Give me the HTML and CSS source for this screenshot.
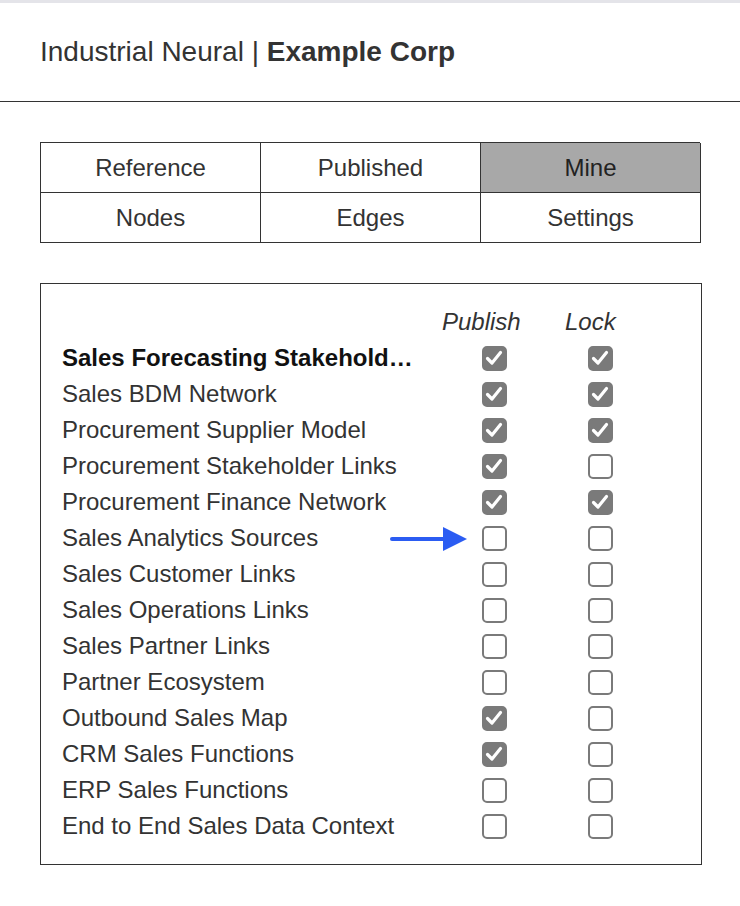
FILE: index.html
```html
<!DOCTYPE html>
<html lang="en">
<head>
    <meta charset="UTF-8">
    <meta name="viewport" content="width=device-width, initial-scale=1.0">
    <title>Industrial Neural | Example Corp</title>
    <link rel="stylesheet" href="styles.css">
</head>
<body>
    <header class="top">
        <h1>Industrial Neural | <b>Example Corp</b></h1>
    </header>

    <main class="page">
        <nav class="tabs">
            <div class="tab">Reference</div>
            <div class="tab">Published</div>
            <div class="tab active">Mine</div>
            <div class="tab">Nodes</div>
            <div class="tab">Edges</div>
            <div class="tab">Settings</div>
        </nav>

        <section class="panel">
            <div class="row head">
                <div class="name"></div>
                <div class="col-pub">Publish</div>
                <div class="col-lock">Lock</div>
            </div>

            <div class="row">
                <div class="name strong">Sales Forecasting Stakeholders</div>
                <div class="col-pub"><span class="box on"></span></div>
                <div class="col-lock"><span class="box on"></span></div>
            </div>
            <div class="row">
                <div class="name">Sales BDM Network</div>
                <div class="col-pub"><span class="box on"></span></div>
                <div class="col-lock"><span class="box on"></span></div>
            </div>
            <div class="row">
                <div class="name">Procurement Supplier Model</div>
                <div class="col-pub"><span class="box on"></span></div>
                <div class="col-lock"><span class="box on"></span></div>
            </div>
            <div class="row">
                <div class="name">Procurement Stakeholder Links</div>
                <div class="col-pub"><span class="box on"></span></div>
                <div class="col-lock"><span class="box"></span></div>
            </div>
            <div class="row">
                <div class="name">Procurement Finance Network</div>
                <div class="col-pub"><span class="box on"></span></div>
                <div class="col-lock"><span class="box on"></span></div>
            </div>
            <div class="row">
                <div class="name">Sales Analytics Sources</div>
                <div class="col-pub">
                    <svg class="pointer" width="80" height="28" viewBox="0 0 80 28">
                        <line x1="2" y1="14" x2="56" y2="14" stroke="#2b5cf2" stroke-width="4" stroke-linecap="round"/>
                        <polygon points="53,2 77,14 53,26" fill="#2b5cf2"/>
                    </svg>
                    <span class="box"></span>
                </div>
                <div class="col-lock"><span class="box"></span></div>
            </div>
            <div class="row">
                <div class="name">Sales Customer Links</div>
                <div class="col-pub"><span class="box"></span></div>
                <div class="col-lock"><span class="box"></span></div>
            </div>
            <div class="row">
                <div class="name">Sales Operations Links</div>
                <div class="col-pub"><span class="box"></span></div>
                <div class="col-lock"><span class="box"></span></div>
            </div>
            <div class="row">
                <div class="name">Sales Partner Links</div>
                <div class="col-pub"><span class="box"></span></div>
                <div class="col-lock"><span class="box"></span></div>
            </div>
            <div class="row">
                <div class="name">Partner Ecosystem</div>
                <div class="col-pub"><span class="box"></span></div>
                <div class="col-lock"><span class="box"></span></div>
            </div>
            <div class="row">
                <div class="name">Outbound Sales Map</div>
                <div class="col-pub"><span class="box on"></span></div>
                <div class="col-lock"><span class="box"></span></div>
            </div>
            <div class="row">
                <div class="name">CRM Sales Functions</div>
                <div class="col-pub"><span class="box on"></span></div>
                <div class="col-lock"><span class="box"></span></div>
            </div>
            <div class="row">
                <div class="name">ERP Sales Functions</div>
                <div class="col-pub"><span class="box"></span></div>
                <div class="col-lock"><span class="box"></span></div>
            </div>
            <div class="row">
                <div class="name">End to End Sales Data Context</div>
                <div class="col-pub"><span class="box"></span></div>
                <div class="col-lock"><span class="box"></span></div>
            </div>
        </section>
    </main>
</body>
</html>
```

FILE: styles.css
```css
body {
    margin: 0;
    background: #fff;
    color: #333;
    font-family: "Liberation Sans", Arial, sans-serif;
}

/* header bar */
.top {
    border-top: 3px solid #e4e4e9;
    border-bottom: 1px solid #333;
    height: 98px;
    display: flex;
    align-items: center;
    padding-left: 40px;
}
.top h1 {
    margin: 0;
    font-size: 28px;
    font-weight: normal;
    color: #333;
    padding-bottom: 1px;
}
.top h1 b {
    font-weight: bold;
}

.page {
    padding: 40px 38px 40px 40px;
}

/* tab grid */
.tabs {
    display: grid;
    grid-template-columns: repeat(3, 220px);
    grid-auto-rows: 50px;
    border-top: 1px solid #333;
    border-left: 1px solid #333;
    width: 660px;
    box-sizing: border-box;
}
.tab {
    display: flex;
    align-items: center;
    justify-content: center;
    border-right: 1px solid #333;
    border-bottom: 1px solid #333;
    font-size: 24px;
    color: #333;
}
.tab.active {
    background: #a8a8a8;
    color: #222;
}

/* publish / lock panel */
.panel {
    margin-top: 40px;
    border: 1px solid #333;
    width: 662px;
    box-sizing: border-box;
    padding: 20px 0 20px 21px;
}
.row {
    display: grid;
    grid-template-columns: 380px 123px 100px;
    height: 36px;
    align-items: center;
    font-size: 24px;
}
.name {
    max-width: 352px;
    white-space: nowrap;
    overflow: hidden;
    text-overflow: ellipsis;
    color: #333;
}
.name.strong {
    font-weight: bold;
    color: #111;
}
.head .col-pub,
.head .col-lock {
    font-style: italic;
    color: #333;
}
.col-pub,
.col-lock {
    position: relative;
    display: flex;
    align-items: center;
}
.row:not(.head) .col-pub {
    padding-left: 40px;
}
.row:not(.head) .col-lock {
    padding-left: 23px;
}

.box {
    width: 25px;
    height: 25px;
    box-sizing: border-box;
    border: 2px solid #7a7a7a;
    border-radius: 5px;
    background: #fff;
}
.box.on {
    background: #7a7a7a url("data:image/svg+xml;utf8,<svg xmlns='http://www.w3.org/2000/svg' viewBox='0 0 25 25'><polyline points='5.5,12.5 10,17 18.5,6.5' fill='none' stroke='white' stroke-width='3.2' stroke-linecap='round' stroke-linejoin='round'/></svg>") center / 25px 25px no-repeat;
}

.pointer {
    position: absolute;
    left: -52px;
    top: 50%;
    margin-top: -13px;
}
```
